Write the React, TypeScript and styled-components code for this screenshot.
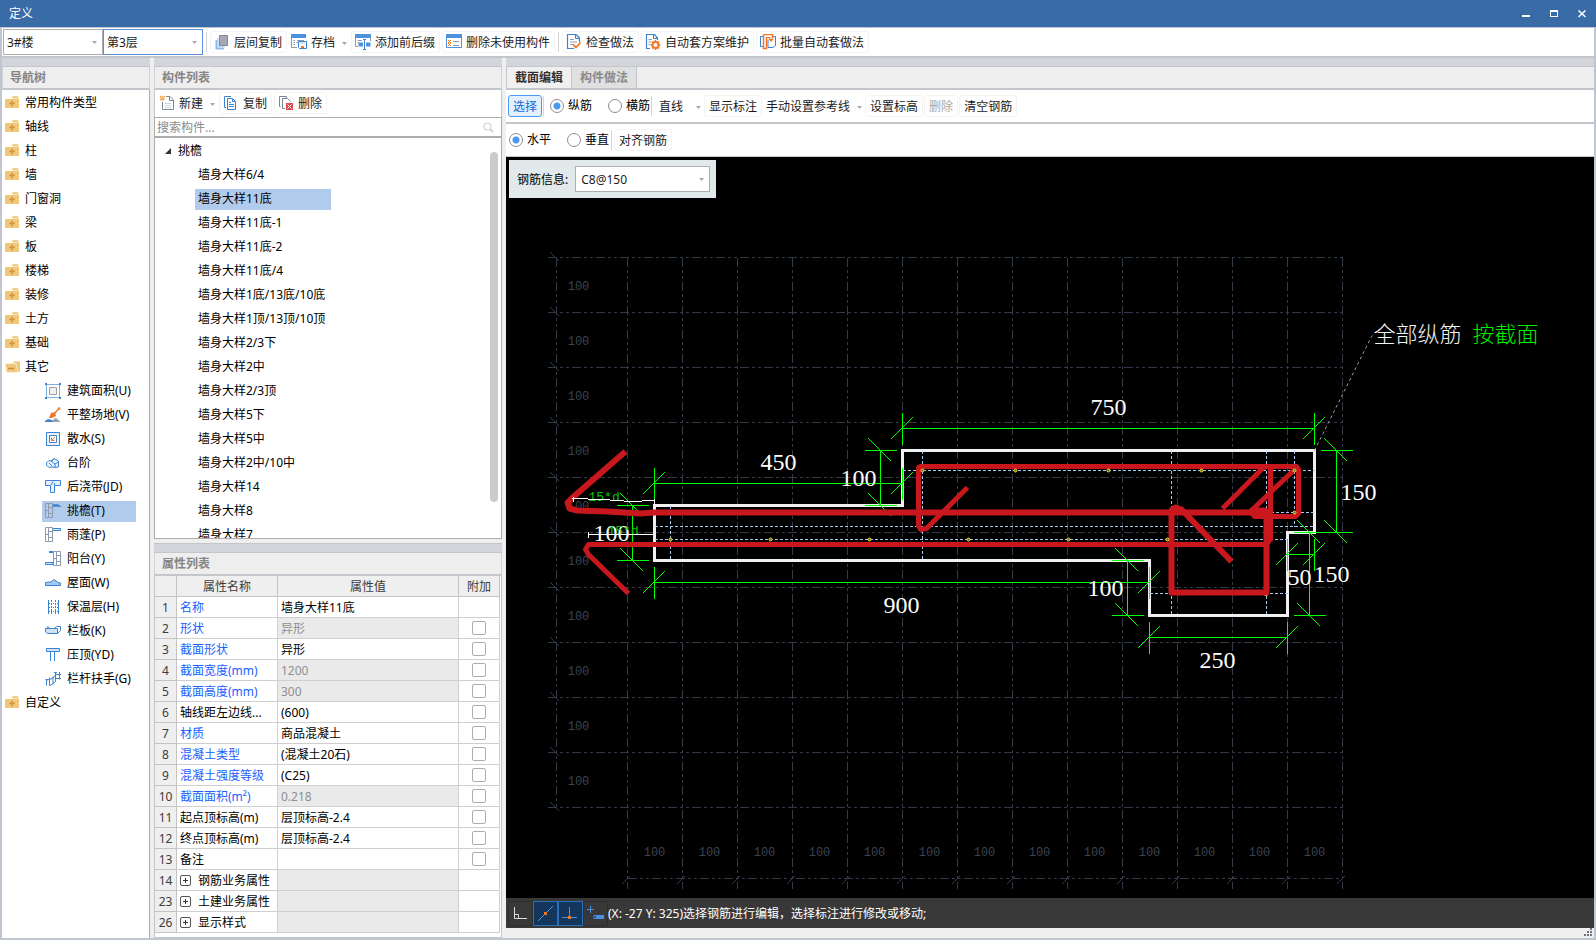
import React from "react";
import styled, { createGlobalStyle, css } from "styled-components";

const UI_FONT = `"Noto Sans", "Noto Sans CJK SC", sans-serif`;
const LINE = "#c3c6cb";
const BLUE = "#3b82d0";
const ORANGE = "#f0782a";

const GlobalStyle = createGlobalStyle`
  * { box-sizing: border-box; }
  body { margin: 0; background: #efefef; }
  body, button, input, select, table {
    font-family: ${UI_FONT};
    font-size: 12px;
    line-height: 16px;
    color: #1c1c1c;
  }
  button { background: none; border: 0; padding: 0; margin: 0; white-space: nowrap; }
  ul { list-style: none; margin: 0; padding: 0; }
  svg { flex: none; display: block; }
`;

/* ---------- window frame ---------- */

const Window = styled.div`
  height: 100vh;
  min-height: 700px;
  display: flex;
  flex-direction: column;
`;

const TitleBar = styled.header`
  height: 27px;
  flex: none;
  display: flex;
  align-items: center;
  justify-content: space-between;
  padding-left: 9px;
  background: #396ba7;
`;

const Title = styled.h1`
  margin: 0;
  font-size: 12px;
  font-weight: 400;
  color: #fff;
`;

const WindowButtons = styled.div`
  display: flex;
`;

const WindowButton = styled.button`
  width: 28px;
  height: 27px;
  display: grid;
  place-items: center;
`;

const Frame = styled.div`
  flex: 1;
  min-height: 0;
  display: flex;
  flex-direction: column;
  border: 2px solid #c0c6d0;
  border-top-width: 1px;
`;

const MainToolbar = styled.div`
  flex: none;
  height: 30px;
  display: flex;
  align-items: center;
  gap: 2px;
  padding-left: 1px;
  background: #fff;
  border-bottom: 2px solid ${LINE};
`;

const SelectPair = styled.div`
  display: flex;
`;

const Separator = styled.span<{ $gap?: number }>`
  width: 1px;
  height: 20px;
  flex: none;
  margin: 0 ${(p) => p.$gap ?? 1}px;
  background: #d4d6da;
`;

const Workspace = styled.main`
  flex: 1;
  min-height: 0;
  display: grid;
  grid-template-columns: 148px 348px minmax(0, 1fr);
  gap: 4px;
`;

const Column = styled.div`
  min-width: 0;
  min-height: 0;
  display: flex;
  flex-direction: column;
  gap: 4px;
`;

const Panel = styled.section<{ $grow?: boolean }>`
  flex: ${(p) => (p.$grow ? "1" : "none")};
  min-width: 0;
  min-height: 0;
  display: flex;
  flex-direction: column;
`;

const Strip = styled.div<{ $topLine?: boolean }>`
  flex: none;
  height: ${(p) => (p.$topLine ? 10 : 9)}px;
  background: #d3d5db;
  border-bottom: 1px solid ${LINE};
  ${(p) => p.$topLine && css`border-top: 1px solid ${LINE};`}
`;

const PanelTitle = styled.h2`
  flex: none;
  margin: 0;
  height: 23px;
  padding: 2px 7px;
  font-size: 12px;
  line-height: 18px;
  font-weight: 700;
  color: #858585;
  background: #eeeeee;
  border: 1px solid #d0d2d6;
  border-top: 0;
  border-bottom: 2px solid ${LINE};
`;

/* ---------- controls ---------- */

const buttonRow = css`
  flex: none;
  height: 22px;
  display: flex;
  align-items: center;
  gap: 4px;
  & > svg { margin-bottom: 2px; }
`;

const ToolButton = styled.button<{ $active?: boolean }>`
  ${buttonRow}
  padding: 2px 4px 0 3px;
  border: 1px solid #f4f4f4;
  border-radius: 3px;
  &:disabled { color: #a8a8a8; }
  ${(p) => p.$active && css`
    border-color: #4a9af0;
    background: #e4f1fd;
    color: #0f67d8;
  `}
`;

const TextButton = styled(ToolButton)`
  padding: 2px 4px 0;
`;

const MenuButton = styled.button<{ $pad?: number }>`
  ${buttonRow}
  padding: 2px 2px 0 ${(p) => p.$pad ?? 2}px;
`;

const ArrowSlot = styled.span<{ $wide?: boolean }>`
  width: ${(p) => (p.$wide ? 14 : 8)}px;
  display: flex;
  justify-content: flex-end;
`;

const Arrow = () => (
  <svg width="5" height="3" viewBox="0 0 5 3" aria-hidden="true">
    <path d="M0 0H5L2.5 3Z" fill="#a9a9a9" />
  </svg>
);

const SelectBox = styled.span<{ $width: number; $focus?: boolean }>`
  width: ${(p) => p.$width}px;
  height: 26px;
  flex: none;
  display: grid;
  grid-template-columns: 1fr 10px;
  align-items: center;
  background: #fff;
  border: 1px solid ${(p) => (p.$focus ? "#5b8fdb" : "#adadad")};
`;

const NativeSelect = styled.select<{ $pad?: number }>`
  grid-area: 1 / 1 / 2 / 3;
  width: 100%;
  height: 24px;
  appearance: none;
  border: 0;
  outline: 0;
  background: transparent;
  padding: 2px 14px 0 ${(p) => p.$pad ?? 3}px;
`;

const SelectArrow = styled.span`
  grid-area: 1 / 2 / 2 / 3;
  pointer-events: none;
`;

const Select = ({ width, value, label, focus, pad, id }: {
  width: number; value: string; label: string; focus?: boolean; pad?: number; id?: string;
}) => (
  <SelectBox $width={width} $focus={focus}>
    <NativeSelect id={id} aria-label={label} defaultValue={value} $pad={pad}>
      <option>{value}</option>
    </NativeSelect>
    <SelectArrow><Arrow /></SelectArrow>
  </SelectBox>
);

const RadioLabel = styled.label`
  flex: none;
  display: flex;
  align-items: center;
  gap: 4px;
  color: #000;
`;

const Radio = styled.input.attrs({ type: "radio" })`
  appearance: none;
  width: 14px;
  height: 14px;
  margin: 0;
  border: 1px solid #8c8c8c;
  border-radius: 50%;
  background: #fff;
  &:checked {
    background: radial-gradient(circle, #4a98f0 0 3px, #fff 4px);
  }
`;

/* ---------- icons ---------- */

const Icon = ({ children }: { children: React.ReactNode }) => (
  <svg width="16" height="16" viewBox="0 0 16 16" fill="none" aria-hidden="true">{children}</svg>
);

const FolderIcon = () => (
  <Icon>
    <path d="M7 3V2L8 1H12.500L13.500 2V3Z" fill="#f0cd8a" />
    <path d="M0 4H7L8 3.500H14V13H0Z" fill="#efc87c" />
    <path d="M7 5.500V11.500M4 8.500H10" stroke="#d09a3a" strokeWidth="1.600" />
  </Icon>
);
const FolderOpenIcon = () => (
  <Icon>
    <path d="M2 4.500H8L9 2.500H15V13H12Z" fill="#efc87c" />
    <path d="M0 4.500H11L13 13.500H1.500Z" fill="#efc87c" stroke="#fff" strokeWidth=".6" />
    <path d="M3 9.500H9" stroke="#c98f2b" strokeWidth="1.500" />
  </Icon>
);
const FloorCopyIcon = () => (
  <Icon>
    <path d="M2.500 6V14.500H10" stroke="#8dbcec" strokeWidth="2" />
    <path d="M4 4V12.500H11" stroke="#bcd8f4" strokeWidth="1.500" />
    <path d="M5.500 1.500H13.500V11.500H5.500Z" fill="#a6a9b5" stroke="#868a97" />
  </Icon>
);
const ArchiveIcon = () => (
  <Icon>
    <path d="M0 0H15V4H0Z" fill="#4e91dc" />
    <path d="M.5 4V13.500H6M2.500 6.500H4M6 6.500H13M2.500 8.500H4M2.500 10.500H4M5.500 8.500H7" stroke="#8a9bb0" />
    <path d="M7.500 7.500H15.500V14.500H8.500L7.500 13.500Z" fill="#fff" stroke={BLUE} />
    <path d="M9 8H14V10H9Z" fill="#d7e7f9" />
    <path d="M10 12H13V14H10Z" fill={ORANGE} />
  </Icon>
);
const AffixIcon = () => (
  <Icon>
    <path d="M0 0H16V4H0Z" fill="#4e91dc" />
    <path d="M.5 4V12.500H3M15.500 4V7M2.500 6.500H7M2.500 8.500H4" stroke="#8a9bb0" />
    <path d="M3.500 8.500H8V12.500H3.500ZM11 8.500H15.500V12.500H11Z" fill="#4e91dc" />
    <path d="M9.500 6V15.500M8 5.500H11M8 15.500H11" stroke={BLUE} />
  </Icon>
);
const DeleteUnusedIcon = () => (
  <Icon>
    <path d="M.5 1.500H15.500V13.500H.5Z" stroke="#4e91dc" />
    <path d="M0 0H16V4H0Z" fill="#4e91dc" />
    <path d="M2 6L5 9M5 6L2 9M2 9L5 12M5 9L2 12" stroke={ORANGE} />
    <path d="M7 7.500H13M7 11.500H13" stroke="#8a9bb0" />
  </Icon>
);
const CheckDocIcon = () => (
  <Icon>
    <path d="M13.500 8V4L10 .5H1.500V14.500H8" stroke={BLUE} strokeWidth="1.200" />
    <path d="M9.500 1V4.500H13" stroke={BLUE} />
    <path d="M4 5.500H8M4 8H11M4 10.500H8" stroke="#8a9bb0" />
    <path d="M7.500 11L10 13.500L14.500 8.500" stroke={ORANGE} strokeWidth="1.800" />
  </Icon>
);
const GearDocIcon = () => (
  <Icon>
    <path d="M12.500 6V4L9.500 .5H1.500V14.500H5" stroke={BLUE} strokeWidth="1.200" />
    <path d="M8.500 1V4.500H12" stroke={BLUE} />
    <path d="M3.500 5.500H7M3.500 8H6M3.500 10.500H5" stroke="#8a9bb0" />
    <circle cx="10.500" cy="11" r="3" stroke={ORANGE} strokeWidth="2" />
    <path d="M10.500 6V8M10.500 14V16M5.500 11H7.500M13.500 11H15.500M7 7.500L8.500 9M14 7.500L12.500 9M7 14.500L8.500 13M14 14.500L12.500 13" stroke={ORANGE} strokeWidth="1.500" />
  </Icon>
);
const BatchIcon = () => (
  <Icon>
    <path d="M3 2.500H.5V12.500H3M12.500 2.500H15.500V11.500L13 13.500H8V6" stroke={BLUE} />
    <path d="M3.500 .5H12.500V4M6.500 3V14.500H3.500V.5" stroke={ORANGE} strokeWidth="1.500" />
    <path d="M6.500 3.500H10.500" stroke={ORANGE} />
    <path d="M8 4.500H14L11 8Z" fill={ORANGE} />
  </Icon>
);
const NewIcon = () => (
  <Icon>
    <path d="M7 1.500H11L14.500 5V14.500H3.500V7" stroke="#7d8894" />
    <path d="M10.500 2V5.500H14" stroke="#7d8894" />
    <path d="M6 8.500H12M6 10.500H12M6 12.500H12" stroke="#cdd3da" />
    <path d="M1 1L5.500 5.500M5.500 1L1 5.500" stroke="#f0902a" strokeDasharray="1.500 .6" strokeWidth="1.500" />
    <path d="M3.250 1V6M1 3.250H6" stroke="#f5b060" strokeWidth=".8" />
  </Icon>
);
const CopyIcon = () => (
  <Icon>
    <path d="M3 12.500H1.500V1.500H8" stroke={BLUE} />
    <path d="M4.500 3.500H9.500L12.500 6.500V14.500H4.500Z" stroke={BLUE} />
    <path d="M9.500 4V6.500H12M6 7.500H8M6 9.500H11M6 11.500H11" stroke={BLUE} />
  </Icon>
);
const DeleteIcon = () => (
  <Icon>
    <path d="M2.500 11.500H1.500V1.500H8.500V3" stroke="#7d8894" />
    <path d="M7 13.500H4.500V3.500H9.500L12.500 6.500" stroke="#7d8894" />
    <path d="M8 8H15V15H8Z" fill="#d94b4b" />
    <path d="M9.500 9.500L13.500 13.500M13.500 9.500L9.500 13.500" stroke="#fff" />
  </Icon>
);
const SearchIcon = () => (
  <svg width="11" height="11" viewBox="0 0 11 11" fill="none" aria-hidden="true">
    <circle cx="4.500" cy="4.500" r="3.500" stroke="#d4d4d4" strokeWidth="1.200" />
    <path d="M7 7L10 10" stroke="#d4d4d4" strokeWidth="2" />
  </svg>
);
const Bricks = ({ x = 0 }: { x?: number }) => (
  <path
    transform={`translate(${x} 0)`}
    d="M.5 .5H7.500V14.500H.5ZM3.500 .5V14.500M3.500 4.500H7.500M.5 7.500H3.500M3.500 10.500H7.500"
    stroke="#8f9bab"
  />
);

const treeIcons: Record<string, React.ReactNode> = {
  area: (
    <Icon>
      <path d="M1.500 1.500H14.500V14.500H1.500Z" stroke="#7fb0e6" />
      <path d="M4.500 4.500H11.500V11.500H4.500Z" fill="#f1f1f1" stroke="#9aa0a8" />
      <path d="M0 0H2V2H0ZM14 0H16V2H14ZM0 14H2V16H0ZM14 14H16V16H14Z" fill={BLUE} />
    </Icon>
  ),
  level: (
    <Icon>
      <path d="M15 .5L9 7" stroke={ORANGE} strokeWidth="1.500" />
      <path d="M6 6L10 5L11 9L7 11L4 11Z" fill={ORANGE} />
      <path d="M13 .5L15.500 3" stroke={ORANGE} />
      <path d="M0 15V14L3 12L7 13L9 15Z" fill={BLUE} />
      <path d="M7 15L9 12L11 11L15.500 15Z" fill="#9a9ea6" />
    </Icon>
  ),
  apron: (
    <Icon>
      <path d="M1.500 1.500H14.500V14.500H1.500Z" stroke={BLUE} fill="#eaf3fc" />
      <path d="M4.500 4.500H11.500V11.500H4.500Z" stroke={BLUE} fill="#fff" />
      <path d="M10 6L6.500 9.500M6.500 6.500V9.500H9.500" stroke={ORANGE} />
    </Icon>
  ),
  steps: (
    <Icon>
      <path d="M1.500 8L4 5.500L6 6L9 3.500L13.500 6V12L10 12.500L7 12L4 12.500L1.500 10Z" fill="#eaf3fc" stroke={BLUE} />
      <path d="M4 8L7 11M6 6L10 9V12M9 4L6 7M10 9L13.500 7" stroke={BLUE} />
    </Icon>
  ),
  strip: (
    <Icon>
      <path d="M.5 1.500H15.500V6.500H9.500V13.500H5.500V6.500H.5Z" fill="#e4effb" stroke={BLUE} />
      <path d="M6 6L8 2.500M9.500 6.500V4" stroke={BLUE} />
    </Icon>
  ),
  eave: (
    <Icon><Bricks /><path d="M8 1.500H13L16 3.500H8Z" fill={BLUE} stroke={BLUE} strokeWidth=".5" /></Icon>
  ),
  canopy: (
    <Icon><Bricks /><path d="M8 1.500H15.500V3.500H8" fill="#d7e7f9" stroke={BLUE} /></Icon>
  ),
  balcony: (
    <Icon><Bricks x={8} /><path d="M4 0H8V2H4Z" fill={BLUE} /><path d="M.5 11.500H8V13.500H.5Z" fill="#d7e7f9" stroke={BLUE} /></Icon>
  ),
  roof: (
    <Icon><path d="M.5 10.500V7.500L4 7L6 7L9 4.500L13 7.500L15.500 8V10.500Z" fill="#a5c8f0" stroke={BLUE} /></Icon>
  ),
  insulation: (
    <Icon>
      <path d="M3.500 1V15M13.500 1V15" stroke={BLUE} />
      <path d="M6.500 1V15M10.500 1V15" stroke={BLUE} strokeDasharray="2 1" />
      <path d="M4 4.500H13M4 8.500H13M4 12.500H13" stroke={BLUE} strokeDasharray="1 1" />
    </Icon>
  ),
  breast: (
    <Icon>
      <path d="M.5 5.500H12.500V10.500H2.500L.5 9Z" fill="#cfe2f8" stroke={BLUE} />
      <path d="M1.500 5.500L3 3.500L5 5.500M10 5L11.500 3.500H15.500V7.500L12.500 10.500" stroke={BLUE} />
    </Icon>
  ),
  coping: (
    <Icon>
      <path d="M1.500 1.500H14.500V4.500H1.500Z" fill="#cfe2f8" stroke={BLUE} />
      <path d="M5.500 5V14M9.500 5V14" stroke={BLUE} />
    </Icon>
  ),
  handrail: (
    <Icon>
      <path d="M.5 8.500H2.500L1.500 8.500V14.500M4.500 6.500V14.500L8 13V5.500M1.500 9L4.500 8.500L8 7L11 3.500M10.500 1.500V10.500L8 12.500M9 1.500H12M10.500 3.500H16M10.500 7.500H16M14.500 1V8.500" stroke={BLUE} />
    </Icon>
  ),
};

/* ---------- navigation tree ---------- */

const NavBody = styled.nav`
  flex: 1;
  min-height: 0;
  overflow: hidden;
  padding-top: 1px;
  background: #fff;
  border-right: 1px solid #adadad;
`;

const TreeRow = styled.li<{ $child?: boolean }>`
  height: 24px;
  display: flex;
  align-items: center;
  gap: 4px;
  padding-left: ${(p) => (p.$child ? 40 : 3)}px;
  color: #000;
`;

const Leaf = styled.span<{ $width: number; $selected?: boolean }>`
  width: ${(p) => p.$width}px;
  height: 21px;
  display: flex;
  align-items: center;
  gap: 6px;
  padding-left: 3px;
  white-space: nowrap;
  background: ${(p) => (p.$selected ? "#b1cbed" : "transparent")};
`;

const groups = ["常用构件类型", "轴线", "柱", "墙", "门窗洞", "梁", "板", "楼梯", "装修", "土方", "基础"];

const otherItems: [string, string][] = [
  ["area", "建筑面积(U)"], ["level", "平整场地(V)"], ["apron", "散水(S)"], ["steps", "台阶"],
  ["strip", "后浇带(JD)"], ["eave", "挑檐(T)"], ["canopy", "雨蓬(P)"], ["balcony", "阳台(Y)"],
  ["roof", "屋面(W)"], ["insulation", "保温层(H)"], ["breast", "栏板(K)"], ["coping", "压顶(YD)"],
  ["handrail", "栏杆扶手(G)"],
];

/* ---------- component list ---------- */

const ListToolbar = styled.div`
  flex: none;
  height: 27px;
  display: flex;
  align-items: center;
  gap: 2px;
  padding: 0 2px 1px;
  background: #fff;
  border-left: 1px solid ${LINE};
  border-right: 1px solid ${LINE};
`;

const SearchBox = styled.label`
  flex: none;
  height: 20px;
  display: flex;
  align-items: center;
  padding-right: 7px;
  background: #fff;
  border: 1px solid #adadad;
`;

const SearchInput = styled.input`
  flex: 1;
  min-width: 0;
  height: 18px;
  border: 0;
  outline: 0;
  padding: 0 2px;
  &::placeholder { color: #8a8a8a; }
`;

const ListBody = styled.div`
  flex: 1;
  min-height: 0;
  display: flex;
  justify-content: space-between;
  padding: 1px 3px 0 0;
  overflow: hidden;
  background: #fff;
  border: 1px solid #adadad;
`;

const ListRoot = styled.li`
  height: 24px;
  display: flex;
  align-items: center;
  gap: 7px;
  padding-left: 10px;
  color: #000;
`;

const ScrollThumb = styled.span`
  width: 8px;
  height: 350px;
  flex: none;
  margin-top: 13px;
  border-radius: 4px;
  background: #cbcbcb;
`;

const components = [
  "墙身大样6/4", "墙身大样11底", "墙身大样11底-1", "墙身大样11底-2", "墙身大样11底/4",
  "墙身大样1底/13底/10底", "墙身大样1顶/13顶/10顶", "墙身大样2/3下", "墙身大样2中", "墙身大样2/3顶",
  "墙身大样5下", "墙身大样5中", "墙身大样2中/10中", "墙身大样14", "墙身大样8", "墙身大样7",
];

/* ---------- property table ---------- */

const TableBox = styled.div`
  padding: 0 1px 4px 0;
  background: #fff;
  border: 1px solid #c0c6d0;
  border-top: 0;
`;

const PropTable = styled.table`
  width: 100%;
  table-layout: fixed;
  border-collapse: separate;
  border-spacing: 0;
`;

const Th = styled.th<{ $width?: number }>`
  width: ${(p) => (p.$width ? `${p.$width}px` : "auto")};
  height: 21px;
  padding: 2px 0 0;
  font-weight: 400;
  text-align: center;
  color: #3c3c3c;
  background: #efefef;
  border-right: 1px solid #c4c4c4;
  border-bottom: 1px solid #c4c4c4;
`;

const Td = styled.td<{ $tone?: "blue" | "readonly"; $center?: boolean }>`
  height: 21px;
  padding: ${(p) => (p.$center ? 0 : 2)}px 3px 0;
  overflow: hidden;
  white-space: nowrap;
  text-align: ${(p) => (p.$center ? "center" : "left")};
  color: ${(p) => (p.$tone === "blue" ? "#1a5fff" : p.$tone === "readonly" ? "#8f8f8f" : "#000")};
  background: ${(p) => (p.$tone === "readonly" ? "#eaeaea" : "#fff")};
  border-right: 1px solid #cfcfcf;
  border-bottom: 1px solid #cfcfcf;
`;

const CheckBox = styled.input.attrs({ type: "checkbox" })`
  appearance: none;
  display: block;
  width: 14px;
  height: 14px;
  margin: 0 auto;
  border: 1px solid #adadad;
  border-radius: 2px;
  background: #fff;
`;

const GroupCell = styled.span`
  display: flex;
  align-items: center;
  gap: 7px;
`;

const ExpandButton = styled.button`
  width: 11px;
  height: 11px;
  margin-bottom: 2px;
  display: grid;
  place-items: center;
  border: 1px solid #555;
  border-radius: 2px;
`;

type Prop = { n: number; name: string; value?: string; blue?: boolean; ro?: boolean; check?: boolean; group?: boolean };
const props: Prop[] = [
  { n: 1, name: "名称", value: "墙身大样11底", blue: true },
  { n: 2, name: "形状", value: "异形", blue: true, ro: true, check: true },
  { n: 3, name: "截面形状", value: "异形", blue: true, check: true },
  { n: 4, name: "截面宽度(mm)", value: "1200", blue: true, ro: true, check: true },
  { n: 5, name: "截面高度(mm)", value: "300", blue: true, ro: true, check: true },
  { n: 6, name: "轴线距左边线...", value: "(600)", check: true },
  { n: 7, name: "材质", value: "商品混凝土", blue: true, check: true },
  { n: 8, name: "混凝土类型", value: "(混凝土20石)", blue: true, check: true },
  { n: 9, name: "混凝土强度等级", value: "(C25)", blue: true, check: true },
  { n: 10, name: "截面面积(m²)", value: "0.218", blue: true, ro: true, check: true },
  { n: 11, name: "起点顶标高(m)", value: "层顶标高-2.4", check: true },
  { n: 12, name: "终点顶标高(m)", value: "层顶标高-2.4", check: true },
  { n: 13, name: "备注", check: true },
  { n: 14, name: "钢筋业务属性", ro: true, group: true },
  { n: 23, name: "土建业务属性", ro: true, group: true },
  { n: 26, name: "显示样式", ro: true, group: true },
];

/* ---------- section editor ---------- */

const Tabs = styled.div`
  flex: none;
  height: 23px;
  display: flex;
  background: #eeeeee;
  border-bottom: 2px solid ${LINE};
`;

const Tab = styled.button<{ $active?: boolean }>`
  height: 21px;
  padding: 0 8px;
  font-weight: 700;
  color: ${(p) => (p.$active ? "#303030" : "#8a8a8a")};
  background: ${(p) => (p.$active ? "#f0f0f0" : "#e0e0e0")};
  border-right: 1px solid ${LINE};
  &:first-child { border-left: 1px solid ${LINE}; }
`;

const EditorBar = styled.div<{ $last?: boolean }>`
  flex: none;
  height: ${(p) => (p.$last ? 33 : 34)}px;
  display: flex;
  align-items: center;
  gap: ${(p) => (p.$last ? 2 : 1)}px;
  padding-left: 2px;
  background: #fff;
  border-bottom: ${(p) => (p.$last ? 1 : 2)}px solid ${LINE};
`;

const RadioGroup = styled.div<{ $pad: number }>`
  display: flex;
  gap: 16px;
  padding-left: ${(p) => p.$pad}px;
`;

const Canvas = styled.div`
  position: relative;
  flex: 1;
  min-height: 0;
  overflow: hidden;
  background: #000;
`;

const RebarInfo = styled.div`
  position: absolute;
  top: 3px;
  left: 3px;
  height: 38px;
  display: flex;
  align-items: center;
  gap: 7px;
  padding: 0 6px 0 8px;
  background: #e1e9eb;
`;

const InfoLabel = styled.label`
  padding-top: 2px;
  color: #000;
`;

const StatusBar = styled.div`
  flex: none;
  height: 30px;
  display: flex;
  align-items: center;
  padding-left: 2px;
  background: #383838;
`;

const StatusButton = styled.button<{ $on?: boolean }>`
  width: 25px;
  height: 25px;
  display: grid;
  place-items: center;
  border: 1px solid ${(p) => (p.$on ? "#2a70b8" : "#2e2e2e")};
  background: ${(p) => (p.$on ? "#14365c" : "#383838")};
`;

const StatusText = styled.span`
  padding-top: 2px;
  color: #fff;
  white-space: nowrap;
`;

const Footer = styled.div`
  flex: none;
  height: 10px;
  display: flex;
  justify-content: flex-end;
  padding-right: 2px;
`;

/* Section drawing: 55 px stand for 100 mm; coordinates are window coordinates, panned into the canvas. */
const CELL = 55;
const GRID = { left: 627, top: 257, cols: 13, rows: 10 };
const gridRight = GRID.left + GRID.cols * CELL;
const gridBottom = GRID.top + GRID.rows * CELL;

const GridLayer = styled.g`
  stroke: #343b48;
  fill: none;
  shape-rendering: crispEdges;
`;

const GridText = styled.text`
  font-family: "Liberation Mono", monospace;
  font-size: 12px;
  fill: #3c4350;
  stroke: none;
  text-anchor: middle;
`;

const DimText = styled.text`
  font-family: "Liberation Serif", serif;
  font-size: 24px;
  fill: #fff;
`;

const HookText = styled.text`
  font-family: "Liberation Mono", monospace;
  font-size: 13px;
  fill: #00c800;
`;

const NoteText = styled.text`
  font-family: "Noto Sans CJK SC", sans-serif;
  font-size: 22px;
  font-weight: 300;
`;

const DimH = ({ y, x1, x2 }: { y: number; x1: number; x2: number }) => (
  <>
    <path d={`M${x1} ${y}H${x2}`} />
    {[x1, x2].map((x) => (
      <path key={x} d={`M${x} ${y - 16}V${y + 16}M${x - 12} ${y + 11}L${x + 10} ${y - 11}`} />
    ))}
  </>
);

const DimV = ({ x, y1, y2 }: { x: number; y1: number; y2: number }) => (
  <>
    <path d={`M${x} ${y1}V${y2}`} />
    {[y1, y2].map((y) => (
      <path key={y} d={`M${x - 16} ${y}H${x + 16}M${x - 12} ${y - 12}L${x + 11} ${y + 11}`} />
    ))}
  </>
);

const range = (n: number) => Array.from({ length: n }, (_, i) => i);

const dims: [number, number, string][] = [
  [1090, 414, "750"], [760, 469, "450"], [840, 485, "100"], [593, 540, "100"], [883, 612, "900"],
  [1340, 499, "150"], [1087, 595, "100"], [1287, 584, "50"], [1313, 581, "150"], [1199, 667, "250"],
];

const rebars: [number, number][] = [
  [670, 539], [770, 539], [869, 539], [968, 539], [1068, 539], [1167, 539],
  [922, 470], [1015, 470], [1108, 470], [1201, 470], [1294, 470], [1294, 512],
];

const SectionDrawing = () => (
  <svg width="100%" height="100%" role="img" aria-label="挑檐截面图">
    <g transform="translate(-505.500 -156.500)" fill="none">
      <GridLayer>
        <g strokeDasharray="9 3 3 3 3 3">
          <path d={`M556 ${GRID.top}V${gridBottom}M${GRID.left} 878H${gridRight}`} />
          {range(GRID.cols + 1).map((i) => (
            <path key={i} d={`M${GRID.left + i * CELL} ${GRID.top}V888`} />
          ))}
          {range(GRID.rows + 1).map((i) => (
            <path key={i} d={`M547 ${GRID.top + i * CELL}H${gridRight}`} />
          ))}
        </g>
        {range(GRID.cols + 1).map((i) => (
          <path key={i} d={`M${GRID.left + i * CELL - 6} 884l8 -8`} />
        ))}
        {range(GRID.rows + 1).map((i) => (
          <path key={i} d={`M550 ${GRID.top + i * CELL - 5}l9 9`} />
        ))}
      </GridLayer>
      {range(GRID.rows).map((i) => (
        <GridText key={i} x={578} y={GRID.top + i * CELL + 32}>100</GridText>
      ))}
      {range(GRID.cols).map((i) => (
        <GridText key={i} x={GRID.left + i * CELL + 27} y={855}>100</GridText>
      ))}

      <path
        d="M654 505H902V450H1314V532H1287V615H1149V560H654Z"
        stroke="#f0f0f0" strokeWidth="3" shapeRendering="crispEdges"
      />
      <path
        d="M902 470H1314M1220 512H1314M654 526H1314M654 539H1287M1149 593H1287M670 505V560M922 450V560M1171 450V615M1266 450V615M1294 450V526"
        stroke="#a9c8ee" strokeDasharray="3 2" shapeRendering="crispEdges"
      />

      <g stroke="#00ff00" shapeRendering="crispEdges">
        <DimH y={428} x1={902} x2={1314} />
        <DimH y={483} x1={654} x2={902} />
        <DimH y={582} x1={654} x2={1149} />
        <DimH y={637} x1={1149} x2={1287} />
        <DimH y={554} x1={1287} x2={1314} />
        <DimV x={880} y1={450} y2={505} />
        <DimV x={632} y1={505} y2={560} />
        <DimV x={1336} y1={450} y2={532} />
        <DimV x={1309} y1={532} y2={615} />
        <DimV x={1127} y1={560} y2={615} />
      </g>
      {dims.map(([x, y, t]) => (
        <DimText key={`${x}-${y}`} x={x} y={y}>{t}</DimText>
      ))}
      <HookText x={588} y={500}>15*d</HookText>
      <HookText x={607} y={534}>15*d</HookText>

      <path
        d="M1171 592H1173M1264 593H1267"
        stroke="#f5dc3c" strokeWidth="5"
      />
      <g stroke="#c8181e" strokeWidth="5" strokeLinejoin="round">
        <path d="M625 451L571 498L567 502L569 508L577 510L607 511L640 513L654 512H1264L1266 515V592H1171V510L1175 507L1181 509L1231 561" strokeWidth="6" />
        <path d="M628 593L588 554L585 549L588 544H1266L1270 538V467" />
        <path d="M967 487L926 528L920 529L918 525V467L920 466H1296L1298 469V513L1295 516H1254L1250 511L1293 470" />
        <path d="M1222 508L1264 466" />
      </g>
      <path d="M1250 511H1264L1268 514V541" stroke="#c8181e" strokeWidth="8" strokeLinejoin="round" />

      <path
        d="M571 498H575M573 496V501M573 498L602 499L630 501L654 500M654 498V504M588 534H654M588 531V537"
        stroke="#fff" shapeRendering="crispEdges"
      />
      {rebars.map(([x, y]) => (
        <circle key={`${x}-${y}`} cx={x} cy={y} r="1.500" fill="#6b6420" stroke="#f5dc3c" />
      ))}

      <path d="M1314 450L1371 336L1374 334" stroke="#9a9a9a" strokeDasharray="3 3" />
      <NoteText x={1373} y={341} fill="#f4f4f4">全部纵筋</NoteText>
      <NoteText x={1472} y={341} fill="#00f000">按截面</NoteText>
    </g>
  </svg>
);

export default function App() {
  return (
    <Window>
      <GlobalStyle />
      <TitleBar>
        <Title>定义</Title>
        <WindowButtons>
          <WindowButton aria-label="最小化">
            <svg width="8" height="8"><path d="M0 5H8V7H0Z" fill="#fff" /></svg>
          </WindowButton>
          <WindowButton aria-label="最大化">
            <svg width="8" height="8"><path d="M0 0H8V7H0ZM1 2V6H7V2Z" fill="#fff" fillRule="evenodd" /></svg>
          </WindowButton>
          <WindowButton aria-label="关闭">
            <svg width="8" height="8"><path d="M.5 .5L7.500 7M7.500 .5L.5 7" stroke="#fff" strokeWidth="1.500" /></svg>
          </WindowButton>
        </WindowButtons>
      </TitleBar>
      <Frame>
        <MainToolbar>
          <SelectPair>
            <Select label="楼栋" width={100} value="3#楼" />
            <Select label="楼层" width={100} value="第3层" focus />
          </SelectPair>
          <Separator />
          <ToolButton><FloorCopyIcon />层间复制</ToolButton>
          <MenuButton><ArchiveIcon />存档<ArrowSlot><Arrow /></ArrowSlot></MenuButton>
          <ToolButton><AffixIcon />添加前后缀</ToolButton>
          <ToolButton><DeleteUnusedIcon />删除未使用构件</ToolButton>
          <Separator />
          <ToolButton><CheckDocIcon />检查做法</ToolButton>
          <ToolButton><GearDocIcon />自动套方案维护</ToolButton>
          <ToolButton><BatchIcon />批量自动套做法</ToolButton>
        </MainToolbar>

        <Workspace>
          <Panel $grow>
            <Strip />
            <PanelTitle>导航树</PanelTitle>
            <NavBody>
              <ul>
                {groups.map((g) => (
                  <TreeRow key={g}><FolderIcon />{g}</TreeRow>
                ))}
                <TreeRow><FolderOpenIcon />其它</TreeRow>
                {otherItems.map(([icon, label]) => (
                  <TreeRow key={icon} $child>
                    <Leaf $width={94} $selected={icon === "eave"}>{treeIcons[icon]}{label}</Leaf>
                  </TreeRow>
                ))}
                <TreeRow><FolderIcon />自定义</TreeRow>
              </ul>
            </NavBody>
          </Panel>

          <Column>
            <Panel $grow>
              <Strip />
              <PanelTitle>构件列表</PanelTitle>
              <ListToolbar>
                <MenuButton><NewIcon />新建<ArrowSlot><Arrow /></ArrowSlot></MenuButton>
                <ToolButton><CopyIcon />复制</ToolButton>
                <ToolButton><DeleteIcon />删除</ToolButton>
              </ListToolbar>
              <SearchBox>
                <SearchInput aria-label="搜索构件" placeholder="搜索构件..." />
                <SearchIcon />
              </SearchBox>
              <ListBody>
                <ul>
                  <ListRoot>
                    <svg width="6" height="6" aria-hidden="true"><path d="M6 0V6H0Z" fill="#333" /></svg>
                    挑檐
                  </ListRoot>
                  {components.map((c, i) => (
                    <TreeRow key={c} $child><Leaf $width={136} $selected={i === 1}>{c}</Leaf></TreeRow>
                  ))}
                </ul>
                <ScrollThumb />
              </ListBody>
            </Panel>

            <Panel>
              <Strip $topLine />
              <PanelTitle>属性列表</PanelTitle>
              <TableBox>
                <PropTable>
                  <thead>
                    <tr>
                      <Th $width={22} aria-label="序号" />
                      <Th $width={101}>属性名称</Th>
                      <Th>属性值</Th>
                      <Th $width={41}>附加</Th>
                    </tr>
                  </thead>
                  <tbody>
                    {props.map((p) => (
                      <tr key={p.n}>
                        <Th scope="row">{p.n}</Th>
                        <Td $tone={p.blue ? "blue" : undefined}>
                          {p.group ? (
                            <GroupCell>
                              <ExpandButton aria-label={`展开${p.name}`}>
                                <svg width="5" height="5"><path d="M2 0H3V2H5V3H3V5H2V3H0V2H2Z" fill="#333" /></svg>
                              </ExpandButton>
                              {p.name}
                            </GroupCell>
                          ) : p.name}
                        </Td>
                        <Td $tone={p.ro ? "readonly" : undefined}>{p.value}</Td>
                        <Td $center>{p.check && <CheckBox aria-label={`附加${p.name}`} />}</Td>
                      </tr>
                    ))}
                  </tbody>
                </PropTable>
              </TableBox>
            </Panel>
          </Column>

          <Panel $grow>
            <Strip />
            <Tabs role="tablist">
              <Tab role="tab" aria-selected="true" $active>截面编辑</Tab>
              <Tab role="tab" aria-selected="false">构件做法</Tab>
            </Tabs>
            <EditorBar>
              <TextButton $active>选择</TextButton>
              <Separator $gap={0} />
              <RadioGroup $pad={5}>
                <RadioLabel><Radio name="bar" defaultChecked />纵筋</RadioLabel>
                <RadioLabel><Radio name="bar" />横筋</RadioLabel>
              </RadioGroup>
              <Separator $gap={0} />
              <MenuButton $pad={6}>直线<ArrowSlot $wide><Arrow /></ArrowSlot></MenuButton>
              <TextButton>显示标注</TextButton>
              <MenuButton $pad={3}>手动设置参考线<ArrowSlot><Arrow /></ArrowSlot></MenuButton>
              <TextButton>设置标高</TextButton>
              <TextButton disabled>删除</TextButton>
              <TextButton>清空钢筋</TextButton>
            </EditorBar>
            <EditorBar $last>
              <RadioGroup $pad={1}>
                <RadioLabel><Radio name="align" defaultChecked />水平</RadioLabel>
                <RadioLabel><Radio name="align" />垂直</RadioLabel>
              </RadioGroup>
              <Separator $gap={0} />
              <TextButton>对齐钢筋</TextButton>
            </EditorBar>
            <Canvas>
              <SectionDrawing />
              <RebarInfo>
                <InfoLabel htmlFor="rebar">钢筋信息:</InfoLabel>
                <Select id="rebar" label="钢筋信息" width={135} value="C8@150" pad={5} />
              </RebarInfo>
            </Canvas>
            <StatusBar>
              <StatusButton aria-label="正交">
                <svg width="15" height="15" fill="none" stroke="#dcdcdc"><path d="M1.500 1V12.500H14M1.500 8.500H5.500V12" /></svg>
              </StatusButton>
              <StatusButton $on aria-label="中点捕捉">
                <svg width="17" height="17"><path d="M1 16L16 1" stroke="#4a90e0" /><path d="M7 7H10V10H7Z" fill={ORANGE} /></svg>
              </StatusButton>
              <StatusButton $on aria-label="垂足捕捉">
                <svg width="17" height="17"><path d="M7.500 2V12.500M0 12.500H15" stroke="#4a90e0" /><path d="M6 11H9V14H6Z" fill={ORANGE} /></svg>
              </StatusButton>
              <StatusButton aria-label="动态输入">
                <svg width="17" height="15"><path d="M3.500 0V7M0 3.500H7M7 9.500H16.500V12.500H7Z" stroke="#4a90e0" fill="none" /><path d="M9 9H17V13H9Z" fill="#4a90e0" /></svg>
              </StatusButton>
              <StatusText>(X: -27 Y: 325)选择钢筋进行编辑，选择标注进行修改或移动;</StatusText>
            </StatusBar>
            <Footer>
              <svg width="8" height="8" fill="#6f747a" aria-hidden="true">
                <path d="M6 0H8V2H6ZM3 3H5V5H3ZM6 3H8V5H6ZM0 6H2V8H0ZM3 6H5V8H3ZM6 6H8V8H6Z" />
              </svg>
            </Footer>
          </Panel>
        </Workspace>
      </Frame>
    </Window>
  );
}
